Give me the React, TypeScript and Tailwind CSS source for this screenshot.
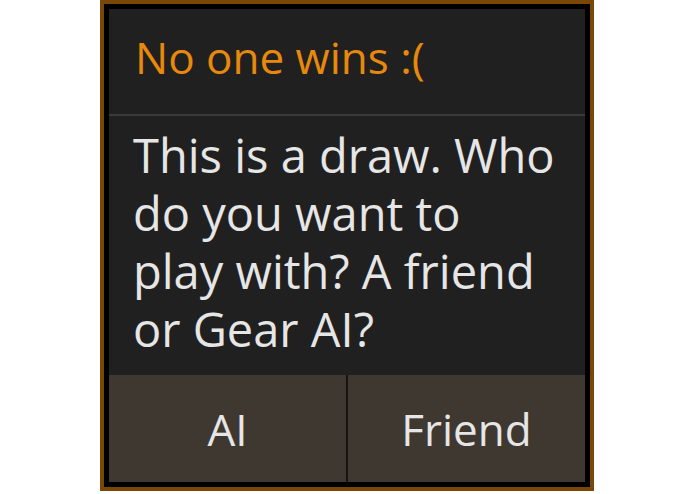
import React from "react";

export default function App() {
  return (
    <div className="w-[695px] h-[494px] bg-white overflow-hidden" style={{ fontFamily: '"Open Sans", "Noto Sans", sans-serif' }}>
      <div className="ml-[100px] w-[494px] h-[491px] border-4 border-[#7a4806] bg-black p-[5px]">
        <div className="flex flex-col h-full bg-[#202020]">
          {/* Title */}
          <div className="h-[105px] pt-[18px] pl-[26px] text-[44px] leading-[60px] text-[#e8890c]">
            No one wins :(
          </div>
          <div className="h-[2px] bg-[#3a3a3a]" />
          {/* Message */}
          <div className="flex-1 pl-[24px] pr-[4px] pt-[10px] text-[47px] leading-[58px] text-[#e6e6e6] whitespace-nowrap">
            This is a draw. Who
            <br />
            do you want to
            <br />
            play with? A friend
            <br />
            or Gear AI?
          </div>
          {/* Buttons */}
          <div className="h-[107px] flex text-[44px] text-[#e6e6e6]">
            <button className="flex-1 bg-[#3f3831] flex items-center justify-center">AI</button>
            <div className="w-[2px] bg-[#161310]" />
            <button className="flex-1 bg-[#3f3831] flex items-center justify-center">Friend</button>
          </div>
        </div>
      </div>
    </div>
  );
}
